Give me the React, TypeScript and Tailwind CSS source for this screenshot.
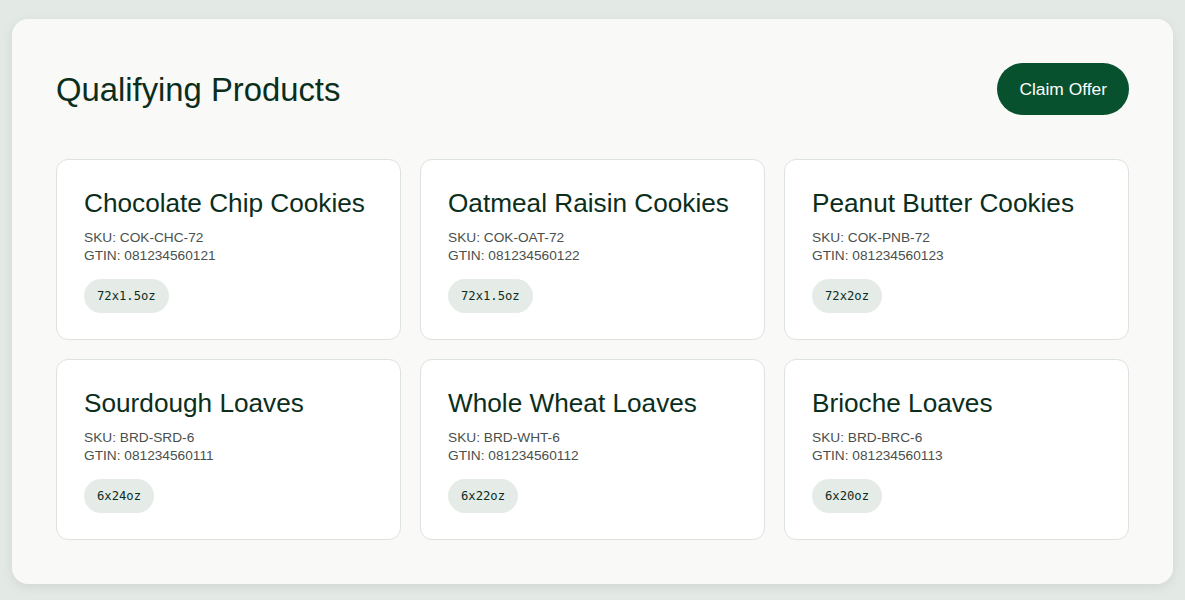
import React from "react";

const products = [
  { name: "Chocolate Chip Cookies", sku: "COK-CHC-72", gtin: "081234560121", size: "72x1.5oz" },
  { name: "Oatmeal Raisin Cookies", sku: "COK-OAT-72", gtin: "081234560122", size: "72x1.5oz" },
  { name: "Peanut Butter Cookies", sku: "COK-PNB-72", gtin: "081234560123", size: "72x2oz" },
  { name: "Sourdough Loaves", sku: "BRD-SRD-6", gtin: "081234560111", size: "6x24oz" },
  { name: "Whole Wheat Loaves", sku: "BRD-WHT-6", gtin: "081234560112", size: "6x22oz" },
  { name: "Brioche Loaves", sku: "BRD-BRC-6", gtin: "081234560113", size: "6x20oz" },
];

export default function App() {
  return (
    <div
      className="min-h-[600px] w-full bg-[#e3e9e5] px-[12px] pt-[19px] pb-[17px]"
      style={{ fontFamily: '"Liberation Sans", Arial, sans-serif' }}
    >
      <div className="rounded-[16px] bg-[#f9f9f7] p-[44px] shadow-[0_3px_12px_rgba(0,0,0,0.08)]">
        <div className="flex items-center justify-between">
          <h1 className="pt-[2px] text-[32.8px] leading-[40px] text-[#0b2e1c]">Qualifying Products</h1>
          <button className="h-[52px] rounded-full bg-[#07512f] px-[22px] text-[17.4px] text-white">
            Claim Offer
          </button>
        </div>
        <div className="mt-[44px] grid grid-cols-3 gap-[19px]">
          {products.map((p) => (
            <div
              key={p.sku}
              className="rounded-[12px] border border-[#dde3df] bg-white px-[27px] pt-[28px] pb-[26px]"
            >
              <h2 className="text-[26.2px] leading-[31px] text-[#0b2e1c]">{p.name}</h2>
              <div className="mt-[10px] text-[13.7px] leading-[18px] text-[#4a4f4c]">
                <div>SKU: {p.sku}</div>
                <div>GTIN: {p.gtin}</div>
              </div>
              <div className="mt-[14px] flex">
                <span
                  className="flex h-[34px] items-center rounded-full bg-[#e5ebe7] px-[13px] text-[12.2px] text-[#0b2e1c]"
                  style={{ fontFamily: '"DejaVu Sans Mono", monospace' }}
                >
                  {p.size}
                </span>
              </div>
            </div>
          ))}
        </div>
      </div>
    </div>
  );
}
